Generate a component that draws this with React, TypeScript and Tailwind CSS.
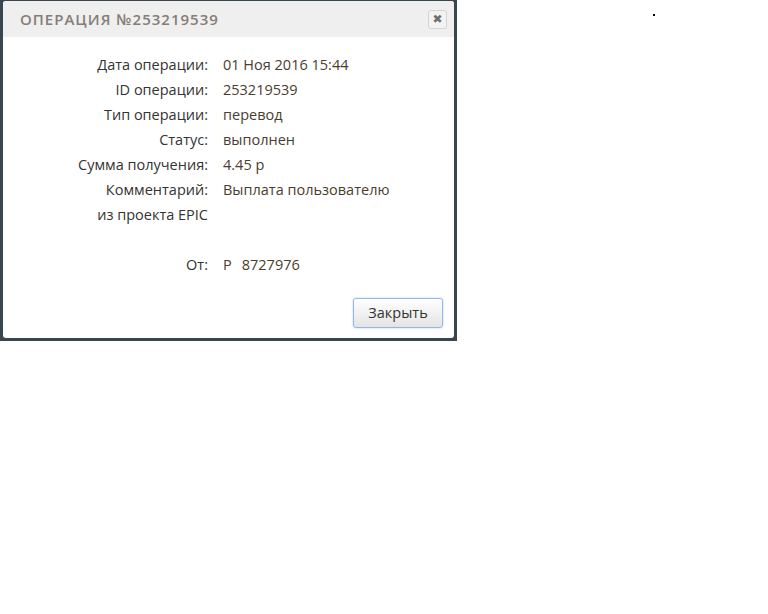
import React from 'react';

interface Row {
  label: string;
  value?: React.ReactNode;
}

const rows: Row[] = [
  { label: 'Дата операции:', value: '01 Ноя 2016 15:44' },
  { label: 'ID операции:', value: '253219539' },
  { label: 'Тип операции:', value: 'перевод' },
  { label: 'Статус:', value: 'выполнен' },
  { label: 'Сумма получения:', value: '4.45 р' },
  { label: 'Комментарий:', value: 'Выплата пользователю' },
  { label: 'из проекта EPIC' },
  { label: '' },
  { label: 'От:', value: <span>Р<span className="inline-block w-[10px]" />8727976</span> },
];

const App: React.FC = () => {
  return (
    <div className="relative w-[768px] h-[614px] bg-white" style={{ fontFamily: '"Open Sans", "DejaVu Sans", sans-serif' }}>
      <div className="w-[457px] h-[341px] bg-[#37474f] pt-[1px] px-[3px] pb-[3px]">
        <div className="flex flex-col h-full bg-white rounded-[3px] overflow-hidden">
          {/* header */}
          <div className="flex items-center justify-between h-[36px] bg-[#efefef] pl-[17px] pr-[7px]">
            <h2 className="text-[15px] font-semibold tracking-[1px] text-[#857d76] uppercase">
              Операция №253219539
            </h2>
            <button
              type="button"
              className="flex items-center justify-center w-[19px] h-[19px] border border-[#d4d4d4] rounded-[3px] bg-[#f3f3f3] text-[#6f6f6f] text-[12px] leading-none"
            >
              ✖
            </button>
          </div>

          {/* body */}
          <div className="flex-1 pt-[15px] text-[14.5px] leading-[25px]">
            {rows.map((r, i) => (
              <div key={i} className="flex h-[25px]">
                <div className="w-[205px] text-right text-[#333]">{r.label}</div>
                <div className="pl-[15px] text-[#4a3d2e]">{r.value}</div>
              </div>
            ))}
          </div>

          {/* footer */}
          <div className="flex justify-end pr-[11px] pb-[10px]">
            <button
              type="button"
              className="w-[90px] h-[30px] rounded-[3px] border border-[#93b6ec] bg-gradient-to-b from-white to-[#e4e4e4] text-[14.5px] text-[#333] shadow-[0_0_2px_rgba(100,150,230,0.5)]"
            >
              Закрыть
            </button>
          </div>
        </div>
      </div>

      <div className="absolute left-[653px] top-[14px] w-[2px] h-[2px] bg-black" />
    </div>
  );
};

export default App;
